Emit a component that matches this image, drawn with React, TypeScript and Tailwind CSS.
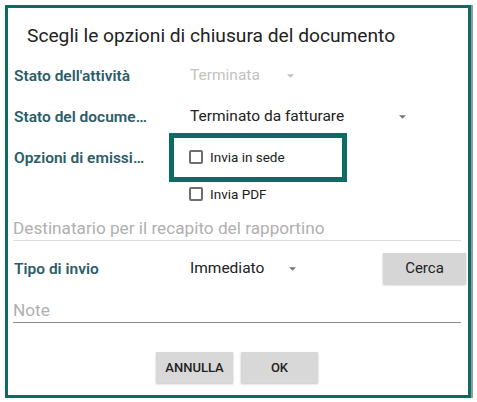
import { useState } from "react";

function Label({ text, width = "w-[176px]" }: { text: string; width?: string }) {
  return (
    <div className={`${width} shrink-0`}>
      <div className="max-w-[138px] truncate text-[15.5px] font-semibold text-[#2c5d69] leading-[20px]">
        {text}
      </div>
    </div>
  );
}

function Caret({ className }: { className?: string }) {
  return (
    <svg viewBox="0 0 10 5" className={`w-[7px] h-[4px] ${className ?? ""}`}>
      <path d="M0 0 L10 0 L5 5 Z" fill="currentColor" />
    </svg>
  );
}

function Check({ label }: { label: string }) {
  const [on, setOn] = useState(false);
  return (
    <label className="flex items-center gap-[7px] cursor-pointer">
      <span
        onClick={() => setOn(!on)}
        className="w-[14px] h-[14px] rounded-[2px] border-2 border-[#6f6f6f] bg-white"
      />
      <span className="text-[13.5px] text-[#222] leading-[20px]">{label}</span>
    </label>
  );
}

export default function App() {
  return (
    <div className="w-[477px] h-[402px] bg-white font-['Roboto',sans-serif] pt-[5px] pl-[5px]">
      <div className="w-[466px] h-[393px] border-[3px] border-[#0d6b66] shadow-[2px_0_0_#9a9a9a] flex flex-col pl-[5px] pr-[7px]">
        <h1 className="pt-[16px] pl-[14px] text-[19.2px] leading-[24px] text-[#222]">
          Scegli le opzioni di chiusura del documento
        </h1>

        <div className="mt-[14px] h-[28px] flex items-center pl-[1px]">
          <Label text="Stato dell'attività" />
          <span className="text-[15.5px] text-[#c2c2c2]">Terminata</span>
          <Caret className="ml-[27px] text-[#c2c2c2]" />
        </div>

        <div className="mt-[13px] h-[28px] flex items-center pl-[1px]">
          <Label text="Stato del documento" />
          <span className="text-[15.5px] text-[#222]">Terminato da fatturare</span>
          <Caret className="ml-[55px] text-[#777]" />
        </div>

        <div className="mt-[13px] h-[28px] flex items-center pl-[1px]">
          <Label text="Opzioni di emissione" width="w-[155px]" />
          <div className="w-[178px] h-[49px] mb-[2px] border-[5px] border-[#0d6b66] flex items-center pl-[15px]">
            <Check label="Invia in sede" />
          </div>
        </div>

        <div className="mt-[8px] h-[28px] flex items-center pl-[176px]">
          <Check label="Invia PDF" />
        </div>

        <div className="mt-[10px] border-b border-[#dcdcdc] pb-[2px]">
          <div className="text-[17.2px] leading-[20px] text-[#b0b0b0]">
            Destinatario per il recapito del rapportino
          </div>
        </div>

        <div className="mt-[12px] h-[31px] flex items-center pl-[1px]">
          <Label text="Tipo di invio" />
          <span className="text-[15.5px] text-[#222]">Immediato</span>
          <Caret className="ml-[25px] text-[#777]" />
          <button className="ml-auto mr-[-5px] w-[83px] h-[31px] bg-[#d6d6d6] text-[15px] text-[#222] shadow-[0_1px_2px_rgba(0,0,0,0.25)]">
            Cerca
          </button>
        </div>

        <div className="mt-[16px] border-b border-[#8a8a8a] pb-[2px]">
          <div className="text-[17.2px] leading-[20px] text-[#b0b0b0]">Note</div>
        </div>

        <div className="mt-[29px] flex justify-center gap-[8px]">
          <button className="w-[77px] h-[31px] bg-[#d8d8d8] text-[13px] font-medium text-[#222] shadow-[0_1px_2px_rgba(0,0,0,0.25)]">
            ANNULLA
          </button>
          <button className="w-[77px] h-[31px] bg-[#d8d8d8] text-[13px] font-medium text-[#222] shadow-[0_1px_2px_rgba(0,0,0,0.25)]">
            OK
          </button>
        </div>
      </div>
    </div>
  );
}
